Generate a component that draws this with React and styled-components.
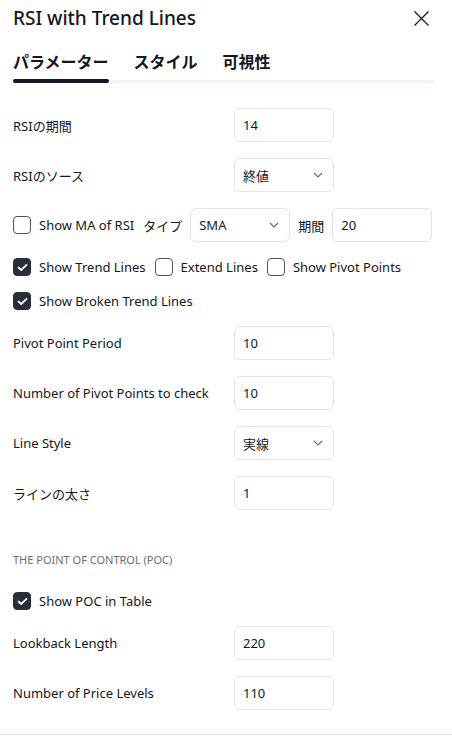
import React from 'react';
import styled, { createGlobalStyle } from 'styled-components';

const Global = createGlobalStyle`
    body {
        margin: 0;
        background: #fff;
        font-family: "Noto Sans", "Noto Sans CJK JP", sans-serif;
        color: #131722;
    }
`;

const Dialog = styled.div`
    width: 452px;
    height: 735px;
    box-sizing: border-box;
    border-bottom: 1px solid #e0e3eb;
    overflow: hidden;
    background: #fff;
`;

const Header = styled.div`
    display: flex;
    align-items: center;
    justify-content: space-between;
    height: 36px;
    padding: 0 22px 0 13px;
`;

const Title = styled.h1`
    margin: 0;
    font-size: 19px;
    font-weight: 500;
`;

const Close = styled.button`
    border: 0;
    background: none;
    padding: 0;
    width: 17px;
    height: 17px;
    display: flex;
    color: #131722;
`;

const Tabs = styled.div`
    margin: 7px 17px 0 13px;
    display: flex;
    gap: 25px;
    border-bottom: 3px solid #f0f3fa;
    position: relative;
`;

const Tab = styled.div`
    font-size: 16px;
    font-weight: 700;
    padding: 6px 0 7px;
    position: relative;
    &::after {
        content: '';
        display: ${p => (p.active ? 'block' : 'none')};
        position: absolute;
        left: 0;
        right: 0;
        bottom: -3px;
        height: 4px;
        border-radius: 2px;
        background: #131722;
    }
`;

const Body = styled.div`
    padding: 25px 13px 0 13px;
    display: flex;
    flex-direction: column;
    gap: 16px;
`;

const Row = styled.div`
    display: flex;
    align-items: center;
    min-height: ${p => (p.check ? '18px' : '34px')};
    gap: ${p => (p.inline ? '8px' : '0')};
    font-size: 13px;
`;

const Label = styled.div`
    width: 221px;
    flex-shrink: 0;
    font-size: 13px;
`;

const Input = styled.div`
    box-sizing: border-box;
    width: 100px;
    height: 34px;
    border: 1px solid #e0e3eb;
    border-radius: 6px;
    padding: 0 8px;
    display: flex;
    align-items: center;
    justify-content: space-between;
    font-size: 13px;
    color: #131722;
`;

const Chevron = styled.svg`
    width: 10px;
    height: 6px;
    margin-right: 2px;
`;

const CheckItem = styled.label`
    display: flex;
    align-items: center;
    gap: 8px;
    margin-right: 1px;
    white-space: nowrap;
`;

const Box = styled.span`
    box-sizing: border-box;
    width: 18px;
    height: 18px;
    border-radius: 4px;
    border: 1px solid ${p => (p.checked ? '#2a2e39' : '#50535e')};
    background: ${p => (p.checked ? '#2a2e39' : '#fff')};
    display: flex;
    align-items: center;
    justify-content: center;
`;

const Section = styled.div`
    font-size: 11px;
    color: #6a6d78;
    text-transform: uppercase;
    height: 16px;
    display: flex;
    align-items: center;
    margin: 25px 0 9px;
`;

const Text = styled.span`
    white-space: nowrap;
`;

const Check = ({ checked, children }) => (
    <CheckItem>
        <Box checked={checked}>
            {checked && (
                <svg width="11" height="9" viewBox="0 0 11 9">
                    <path d="M1.5 4.5 L4.2 7 L9.5 1.8" fill="none" stroke="#fff" strokeWidth="1.8" strokeLinecap="round" strokeLinejoin="round" />
                </svg>
            )}
        </Box>
        {children}
    </CheckItem>
);

const Select = ({ value }) => (
    <Input>
        {value}
        <Chevron viewBox="0 0 10 6">
            <path d="M1 1 L5 5 L9 1" fill="none" stroke="#6a6d78" strokeWidth="1.2" />
        </Chevron>
    </Input>
);

const Field = ({ label, value, select }) => (
    <Row>
        <Label>{label}</Label>
        {select ? <Select value={value} /> : <Input>{value}</Input>}
    </Row>
);

export default function App() {
    return (
        <Dialog>
            <Global />
            <Header>
                <Title>RSI with Trend Lines</Title>
                <Close>
                    <svg width="17" height="17" viewBox="0 0 17 17">
                        <path d="M1.5 1.5 L15.5 15.5 M15.5 1.5 L1.5 15.5" stroke="#131722" strokeWidth="1.3" />
                    </svg>
                </Close>
            </Header>
            <Tabs>
                <Tab active>パラメーター</Tab>
                <Tab>スタイル</Tab>
                <Tab>可視性</Tab>
            </Tabs>
            <Body>
                <Field label="RSIの期間" value="14" />
                <Field label="RSIのソース" value="終値" select />
                <Row inline>
                    <Check>Show MA of RSI</Check>
                    <Text>タイプ</Text>
                    <Select value="SMA" />
                    <Text>期間</Text>
                    <Input>20</Input>
                </Row>
                <Row check inline>
                    <Check checked>Show Trend Lines</Check>
                    <Check>Extend Lines</Check>
                    <Check>Show Pivot Points</Check>
                </Row>
                <Row check>
                    <Check checked>Show Broken Trend Lines</Check>
                </Row>
                <Field label="Pivot Point Period" value="10" />
                <Field label="Number of Pivot Points to check" value="10" />
                <Field label="Line Style" value="実線" select />
                <Field label="ラインの太さ" value="1" />
                <Section>The Point of Control (POC)</Section>
                <Row check>
                    <Check checked>Show POC in Table</Check>
                </Row>
                <Field label="Lookback Length" value="220" />
                <Field label="Number of Price Levels" value="110" />
            </Body>
        </Dialog>
    );
}
